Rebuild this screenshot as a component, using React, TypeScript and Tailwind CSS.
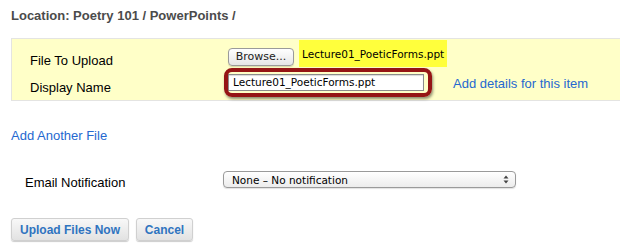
import React from "react"

const ui = "font-['DejaVu_Sans',Verdana,sans-serif]"

export default function App() {
  return (
    <div className="w-[620px] h-[252px] bg-white overflow-hidden font-['Liberation_Sans',Arial,sans-serif] text-[13px] text-black">
      {/* Breadcrumb */}
      <div className="pl-[11px] pt-[8px] leading-[15px] font-bold text-[#4b4b4b]">
        Location: Poetry 101 / PowerPoints /
      </div>

      {/* Upload box */}
      <div className="relative ml-[11px] mt-[15px] h-[63px] bg-[#ffffc8] border-y border-l border-[#e4e4e2]">
        <div className="flex h-[29px]">
          <div className="w-[216px] pl-[18px] pt-[14px] leading-[15px]">File To Upload</div>
          <button
            className={`${ui} mt-[9px] h-[18px] w-[66px] rounded-[4px] border border-[#9a9a9a] bg-gradient-to-b from-white to-[#e6e6e6] text-[11px] leading-[16px] text-[#222] shadow-[0_1px_1px_rgba(0,0,0,0.15)]`}
          >
            Browse...
          </button>
          <span className={`${ui} ml-[5px] mt-[1px] h-[27px] px-[3px] bg-[#ffff3c] text-[10.5px] leading-[27px] pt-[1px]`}>
            Lecture01_PoeticForms.ppt
          </span>
        </div>
        <div className="flex h-[32px]">
          <div className="w-[216px] pl-[18px] pt-[12px] leading-[15px]">Display Name</div>
          <div className="relative mt-[6px] h-[17px] w-[196px]">
            <div
              className={`${ui} h-[17px] w-[196px] border border-[#8c8c8c] bg-white px-[4px] text-[10.5px] leading-[15px] shadow-[inset_0_1px_1px_rgba(0,0,0,0.15)]`}
            >
              Lecture01_PoeticForms.ppt
            </div>
            {/* Annotation ring */}
            <div className="pointer-events-none absolute left-[-4px] top-[-6px] h-[29px] w-[208px] rounded-[8px] border-[4px] border-[#951515] shadow-[1px_2px_3px_rgba(0,0,0,0.45)]" />
          </div>
          <a href="#" className="ml-[29px] pt-[8px] leading-[15px] text-[#2568d0]">
            Add details for this item
          </a>
        </div>
      </div>

      <div className="pl-[11px] mt-[27px] leading-[15px]">
        <a href="#" className="text-[#2568d0]">Add Another File</a>
      </div>

      {/* Email notification */}
      <div className="flex mt-[27px]">
        <div className="w-[223px] pl-[25px] pt-[5px] leading-[15px]">Email Notification</div>
        <div className="mt-[1px] flex h-[17px] w-[293px] items-center justify-between rounded-[4px] border border-[#9a9a9a] bg-gradient-to-b from-white to-[#ececec] pl-[8px] pr-[6px] shadow-[0_1px_1px_rgba(0,0,0,0.12)]">
          <span className={`${ui} text-[10.5px] leading-[15px] pt-[1px]`}>None – No notification</span>
          <svg width="6" height="9" viewBox="0 0 6 9">
            <path d="M0.5 3.5 L3 0.5 L5.5 3.5 Z" fill="#444" />
            <path d="M0.5 5.5 L3 8.5 L5.5 5.5 Z" fill="#444" />
          </svg>
        </div>
      </div>

      {/* Actions */}
      <div className="flex gap-[7px] pl-[11px] mt-[28px]">
        <button className="h-[23px] w-[118px] rounded-[3px] border border-[#d0d0d0] bg-gradient-to-b from-[#f8f8f8] to-[#e2e2e2] text-[12px] font-bold text-[#2f74c0] shadow-[0_1px_1px_rgba(0,0,0,0.2)]">
          Upload Files Now
        </button>
        <button className="h-[23px] w-[57px] rounded-[3px] border border-[#d0d0d0] bg-gradient-to-b from-[#f8f8f8] to-[#e2e2e2] text-[12px] font-bold text-[#2f74c0] shadow-[0_1px_1px_rgba(0,0,0,0.2)]">
          Cancel
        </button>
      </div>
    </div>
  )
}
